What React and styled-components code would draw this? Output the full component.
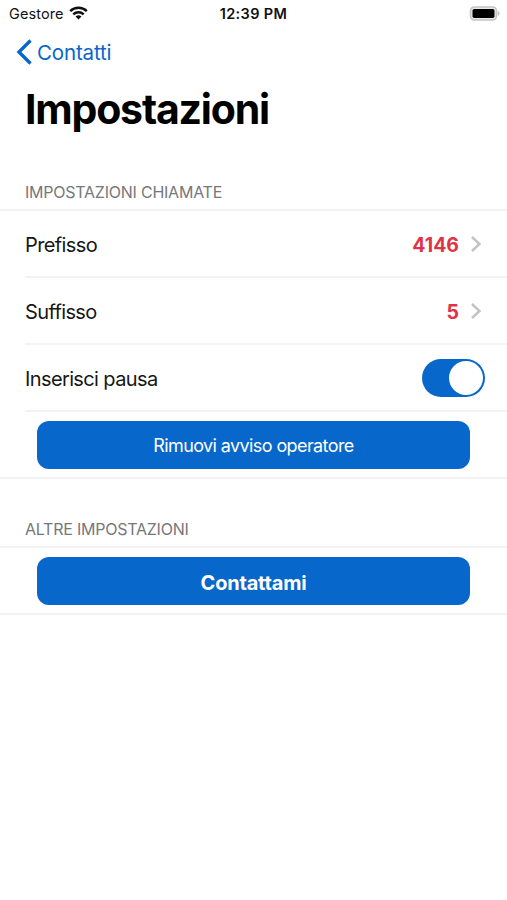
import { useState } from "react";
import styled, { createGlobalStyle } from "styled-components";

const GlobalStyle = createGlobalStyle`
  :root {
    --blue: #0767ca;
    --red: #df3346;
    --text: #161616;
    --muted: #77777a;
    --line: #f3f3f4;
  }
  * { box-sizing: border-box; }
  body {
    margin: 0;
    background: #fff;
    color: var(--text);
    font-family: Inter, "Liberation Sans", sans-serif;
  }
`;

const Screen = styled.div`
  min-height: 900px;
  background: #fff;
  overflow: hidden;
`;

const StatusBar = styled.header`
  height: 26px;
  display: grid;
  grid-template-columns: 1fr auto 1fr;
  align-items: center;
  padding: 0 7px 0 9px;
  color: #111;
`;

const Carrier = styled.div`
  display: flex;
  align-items: center;
  gap: 5px;
  font-size: 14.5px;
  letter-spacing: 0.1px;
`;

const Clock = styled.div`
  margin-right: 2px;
  font-size: 14.5px;
  font-weight: 600;
  letter-spacing: 0.35px;
`;

const Battery = styled.svg`
  justify-self: end;
`;

const BackButton = styled.button`
  display: flex;
  align-items: center;
  gap: 5px;
  height: 52px;
  padding: 0 0 0 15px;
  border: none;
  background: transparent;
  color: var(--blue);
  font: 400 20.5px Inter, sans-serif;
  letter-spacing: -0.15px;
  cursor: pointer;
`;

const Title = styled.h1`
  margin: 0;
  padding: 6px 25px 0;
  height: 78px;
  font-size: 41px;
  line-height: 50px;
  font-weight: 700;
  letter-spacing: -1.2px;
  color: #000;
`;

const SectionTitle = styled.h2`
  margin: 0;
  height: ${(p) => p.$height}px;
  padding: 0 25px 7px;
  display: flex;
  align-items: flex-end;
  font-size: 16px;
  line-height: 20px;
  font-weight: 400;
  letter-spacing: -0.23px;
  color: var(--muted);
`;

const Group = styled.section`
  border-top: 2px solid var(--line);
  border-bottom: 2px solid var(--line);
`;

const Row = styled.div`
  display: flex;
  align-items: center;
  height: 67px;
  margin-left: 25px;
  padding-right: ${(p) => (p.$link ? 25 : 22)}px;
  border-bottom: 2px solid var(--line);
`;

const Label = styled.span`
  flex: 1;
  padding-top: 2px;
  font-size: 20px;
  letter-spacing: -0.62px;
`;

const Value = styled.span`
  margin-right: 11px;
  padding-top: 2px;
  color: var(--red);
  font-size: 19.5px;
  font-weight: 700;
`;

const Switch = styled.button`
  display: flex;
  justify-content: ${(p) => (p.$on ? "flex-end" : "flex-start")};
  width: 63px;
  height: 38px;
  padding: 2px;
  border: none;
  border-radius: 19px;
  background: ${(p) => (p.$on ? "var(--blue)" : "#e5e5ea")};
  cursor: pointer;
`;

const Knob = styled.span`
  width: 34px;
  height: 34px;
  border-radius: 50%;
  background: #fff;
`;

const ButtonCell = styled.div`
  padding: 9px 37px 8px;
`;

const ActionButton = styled.button`
  display: block;
  width: 100%;
  height: 48px;
  padding: ${(p) => (p.$strong ? "3px 0 0" : "1px 0 0")};
  border: none;
  border-radius: 12px;
  background: var(--blue);
  color: #fff;
  font-family: inherit;
  font-size: ${(p) => (p.$strong ? 20 : 18)}px;
  font-weight: ${(p) => (p.$strong ? 700 : 400)};
  letter-spacing: ${(p) => (p.$strong ? "-0.2px" : "-0.6px")};
  cursor: pointer;
`;

function WifiIcon() {
  return (
    <svg width="19" height="14" viewBox="0 0 19 14" fill="none" stroke="#111" strokeWidth="2.5">
      <path d="M1.2 5.1a11.8 11.8 0 0 1 16.6 0" />
      <path d="M4.3 8.4a7.4 7.4 0 0 1 10.4 0" />
      <path d="M9.5 13.6 6.5 10.6a4.3 4.3 0 0 1 6 0z" fill="#111" stroke="none" />
    </svg>
  );
}

function BatteryIcon() {
  return (
    <Battery width="31" height="15" viewBox="0 0 31 15">
      <rect x="1.5" y="1" width="26" height="13" rx="4" fill="#e8e8e8" stroke="#c4c4c4" strokeWidth="1.6" />
      <rect x="3.500" y="3" width="22" height="9" rx="1.8" fill="#000" />
      <path d="M28.800 5v5c1.1-.4 1.8-1.4 1.8-2.5S29.900 5.400 28.800 5z" fill="#bdbdbd" />
    </Battery>
  );
}

function Chevron() {
  return (
    <svg width="12" height="18" viewBox="0 0 12 18" fill="none" stroke="#c3c3c6" strokeWidth="2.4">
      <path d="M2 2l7.500 7L2 16" />
    </svg>
  );
}

export default function App() {
  const [pause, setPause] = useState(true);

  return (
    <Screen>
      <GlobalStyle />
      <StatusBar>
        <Carrier>
          Gestore
          <WifiIcon />
        </Carrier>
        <Clock>12:39 PM</Clock>
        <BatteryIcon />
      </StatusBar>

      <BackButton type="button">
        <svg width="17" height="26" viewBox="0 0 17 26" fill="none" stroke="currentColor" strokeWidth="3.4">
          <path d="M15.500 1.500 4 13l11.500 11.500" />
        </svg>
        Contatti
      </BackButton>
      <Title>Impostazioni</Title>

      <SectionTitle $height={53}>IMPOSTAZIONI CHIAMATE</SectionTitle>
      <Group>
        <Row $link>
          <Label>Prefisso</Label>
          <Value>4146</Value>
          <Chevron />
        </Row>
        <Row $link>
          <Label>Suffisso</Label>
          <Value>5</Value>
          <Chevron />
        </Row>
        <Row>
          <Label>Inserisci pausa</Label>
          <Switch type="button" role="switch" aria-checked={pause} $on={pause} onClick={() => setPause(!pause)}>
            <Knob />
          </Switch>
        </Row>
        <ButtonCell>
          <ActionButton type="button">Rimuovi avviso operatore</ActionButton>
        </ButtonCell>
      </Group>

      <SectionTitle $height={67}>ALTRE IMPOSTAZIONI</SectionTitle>
      <Group>
        <ButtonCell>
          <ActionButton type="button" $strong>
            Contattami
          </ActionButton>
        </ButtonCell>
      </Group>
    </Screen>
  );
}
